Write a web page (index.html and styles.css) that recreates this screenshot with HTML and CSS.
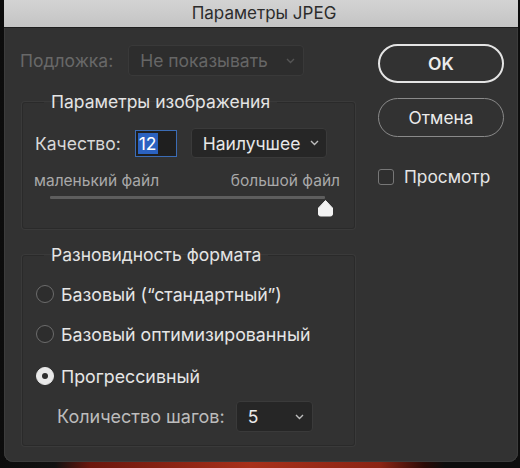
FILE: index.html
```html
<!DOCTYPE html>
<html lang="ru">
<head>
<meta charset="utf-8">
<title>Параметры JPEG</title>
<link rel="stylesheet" href="styles.css">
</head>
<body>
<div class="window">
  <div class="titlebar">Параметры JPEG</div>
  <div class="content">
    <div class="left">
      <div class="row matte">
        <span class="label disabled">Подложка:</span>
        <div class="select select-disabled">
          <span>Не показывать</span>
          <svg class="chev" width="9" height="6" viewBox="0 0 9 6"><polyline points="1,1 4.5,4.5 8,1" fill="none" stroke="#555" stroke-width="1.4"/></svg>
        </div>
      </div>

      <fieldset class="group g1">
        <legend>Параметры изображения</legend>
        <div class="row quality">
          <span class="label">Качество:</span>
          <div class="num"><span class="sel">12</span></div>
          <div class="select select-q">
            <span>Наилучшее</span>
            <svg class="chev" width="9" height="6" viewBox="0 0 9 6"><polyline points="1,1 4.5,4.5 8,1" fill="none" stroke="#bdbdbd" stroke-width="1.4"/></svg>
          </div>
        </div>
        <div class="scale">
          <span>маленький файл</span>
          <span>большой файл</span>
        </div>
        <div class="slider">
          <div class="track"></div>
          <svg class="thumb" width="17" height="18" viewBox="0 0 17 18"><path d="M8.5 1.5 L15.5 9 V15 Q15.5 17 13.5 17 H3.5 Q1.5 17 1.5 15 V9 Z" fill="#f2f2f2" stroke="#f2f2f2" stroke-width="1" stroke-linejoin="round"/></svg>
        </div>
      </fieldset>

      <fieldset class="group g2">
        <legend>Разновидность формата</legend>
        <div class="radio r1"><span class="circle"></span><span>Базовый (“стандартный”)</span></div>
        <div class="radio r2"><span class="circle"></span><span>Базовый оптимизированный</span></div>
        <div class="radio r3"><span class="circle on"></span><span>Прогрессивный</span></div>
        <div class="row steps">
          <span class="label soft">Количество шагов:</span>
          <div class="select select-s">
            <span>5</span>
            <svg class="chev" width="9" height="6" viewBox="0 0 9 6"><polyline points="1,1 4.5,4.5 8,1" fill="none" stroke="#bdbdbd" stroke-width="1.4"/></svg>
          </div>
        </div>
      </fieldset>
    </div>

    <div class="right">
      <button class="btn ok">OK</button>
      <button class="btn cancel">Отмена</button>
      <label class="check"><span class="box"></span><span>Просмотр</span></label>
    </div>
  </div>
</div>
</body>
</html>
```

FILE: styles.css
```css
* { box-sizing: border-box; }
html, body { margin: 0; padding: 0; }
body {
  width: 520px;
  height: 468px;
  overflow: hidden;
  font-family: Inter, "Noto Sans", sans-serif;
  background: linear-gradient(90deg, #0c0c0c 0px, #111 55px, #6a160d 90px, #a8301a 250px, #8a2414 380px, #2a0a06 425px, #0d0d0d 445px);
}
.window {
  margin-left: 4px;
  width: 514px;
  height: 462px;
  background: #323232;
  border-radius: 0 0 9px 9px;
  display: flex;
  flex-direction: column;
  box-shadow: inset 1px 0 0 #3c3c3c, inset -1px 0 0 #3c3c3c, inset 0 -1px 0 #3c3c3c;
  color: #dedede;
}
.titlebar {
  height: 28px;
  background: linear-gradient(#d3d3d3, #c4c4c4);
  border-bottom: 1px solid #1e1e1e;
  color: #2c2c2c;
  font-size: 17px;
  text-align: center;
  line-height: 27px;
  padding-left: 6px;
}
.content {
  display: flex;
  flex: 1;
}
.left {
  width: 358px;
  padding-left: 16px;
}
.row {
  display: flex;
  align-items: center;
}
.label { font-size: 17.5px; color: #d8d8d8; }
.disabled { color: #686868; }
.soft { color: #bcbcbc; font-size: 18px; }
.matte {
  margin-top: 17px;
  height: 31px;
}
.select {
  display: flex;
  align-items: center;
  justify-content: space-between;
  border-radius: 4px;
  font-size: 17.5px;
}
.select-disabled {
  margin-left: 15px;
  width: 176px;
  height: 31px;
  background: #2d2d2d;
  border: 1px solid #393939;
  color: #666;
  padding: 0 8px 0 11px;
}
.group {
  margin: 15px 0 0 2px;
  width: 333px;
  border: 1px solid #2a2a2a;
  box-shadow: 0 0 0 1px #3a3a3a;
  border-radius: 3px;
  padding: 0;
  min-width: 0;
}
.group legend {
  margin-left: 21px;
  padding: 0 7px;
  font-size: 17.5px;
  line-height: 22px;
  color: #e4e4e4;
}
.g1 { height: 138px; }
.quality {
  margin-top: 15px;
  padding-left: 12px;
  height: 30px;
}
.num {
  margin-left: 14px;
  width: 42px;
  height: 27px;
  border: 1px solid #3b6cb5;
  background: #1f1f1f;
  padding: 2px 0 2px 2px;
  display: flex;
}
.sel {
  background: #2b62c0;
  color: #fff;
  font-size: 17.5px;
  line-height: 21px;
  padding: 0 1px;
}
.select-q {
  margin-left: 14px;
  width: 136px;
  height: 30px;
  background: #262626;
  border: 1px solid #3a3a3a;
  color: #e8e8e8;
  padding: 0 7px 0 11px;
}
.scale {
  margin-top: 14px;
  padding: 0 14px 0 11px;
  display: flex;
  justify-content: space-between;
  font-size: 15.5px;
  color: #a9a9a9;
  line-height: 18px;
}
.slider {
  margin: 6px 0 0 27px;
  width: 284px;
  display: flex;
  flex-direction: column;
}
.track {
  width: 275px;
  height: 3px;
  background: #5e5e5e;
  border-radius: 1px;
}
.thumb {
  align-self: flex-end;
  margin-top: 0;
}
.g2 {
  height: 202px;
}
.radio {
  display: flex;
  align-items: center;
  padding-left: 13px;
  font-size: 17.8px;
  color: #e6e6e6;
  height: 20px;
}
.r1 { margin-top: 18px; }
.r2 { margin-top: 20px; }
.r3 { margin-top: 22px; }
.circle {
  width: 18px;
  height: 18px;
  border-radius: 50%;
  border: 1px solid #6c6c6c;
  background: #2d2d2d;
  margin-right: 7px;
  flex: none;
}
.circle.on {
  background: #e9e9e9;
  border-color: #e9e9e9;
  display: flex;
  align-items: center;
  justify-content: center;
}
.circle.on::after {
  content: "";
  width: 6px;
  height: 6px;
  border-radius: 50%;
  background: #2e2e2e;
}
.steps {
  margin-top: 15px;
  padding-left: 34px;
  height: 31px;
}
.select-s {
  margin-left: 11px;
  width: 77px;
  height: 31px;
  background: #262626;
  border: 1px solid #3a3a3a;
  color: #ececec;
  padding: 0 8px 0 11px;
}
.right {
  display: flex;
  flex-direction: column;
  padding-left: 16px;
}
.btn {
  width: 126px;
  height: 39px;
  border-radius: 20px;
  background: transparent;
  font-family: inherit;
  font-size: 17.3px;
  color: #ececec;
  padding: 0;
}
.ok {
  margin-top: 16px;
  border: 2px solid #e4e4e4;
  font-weight: 600;
  font-size: 17.5px;
}
.cancel {
  margin-top: 15px;
  border: 1.5px solid #8a8a8a;
}
.check {
  margin-top: 29px;
  display: flex;
  align-items: center;
  font-size: 17.3px;
  color: #e6e6e6;
}
.box {
  width: 16px;
  height: 16px;
  border: 1px solid #777;
  border-radius: 3px;
  background: #2f2f2f;
  margin-right: 10px;
}
```
